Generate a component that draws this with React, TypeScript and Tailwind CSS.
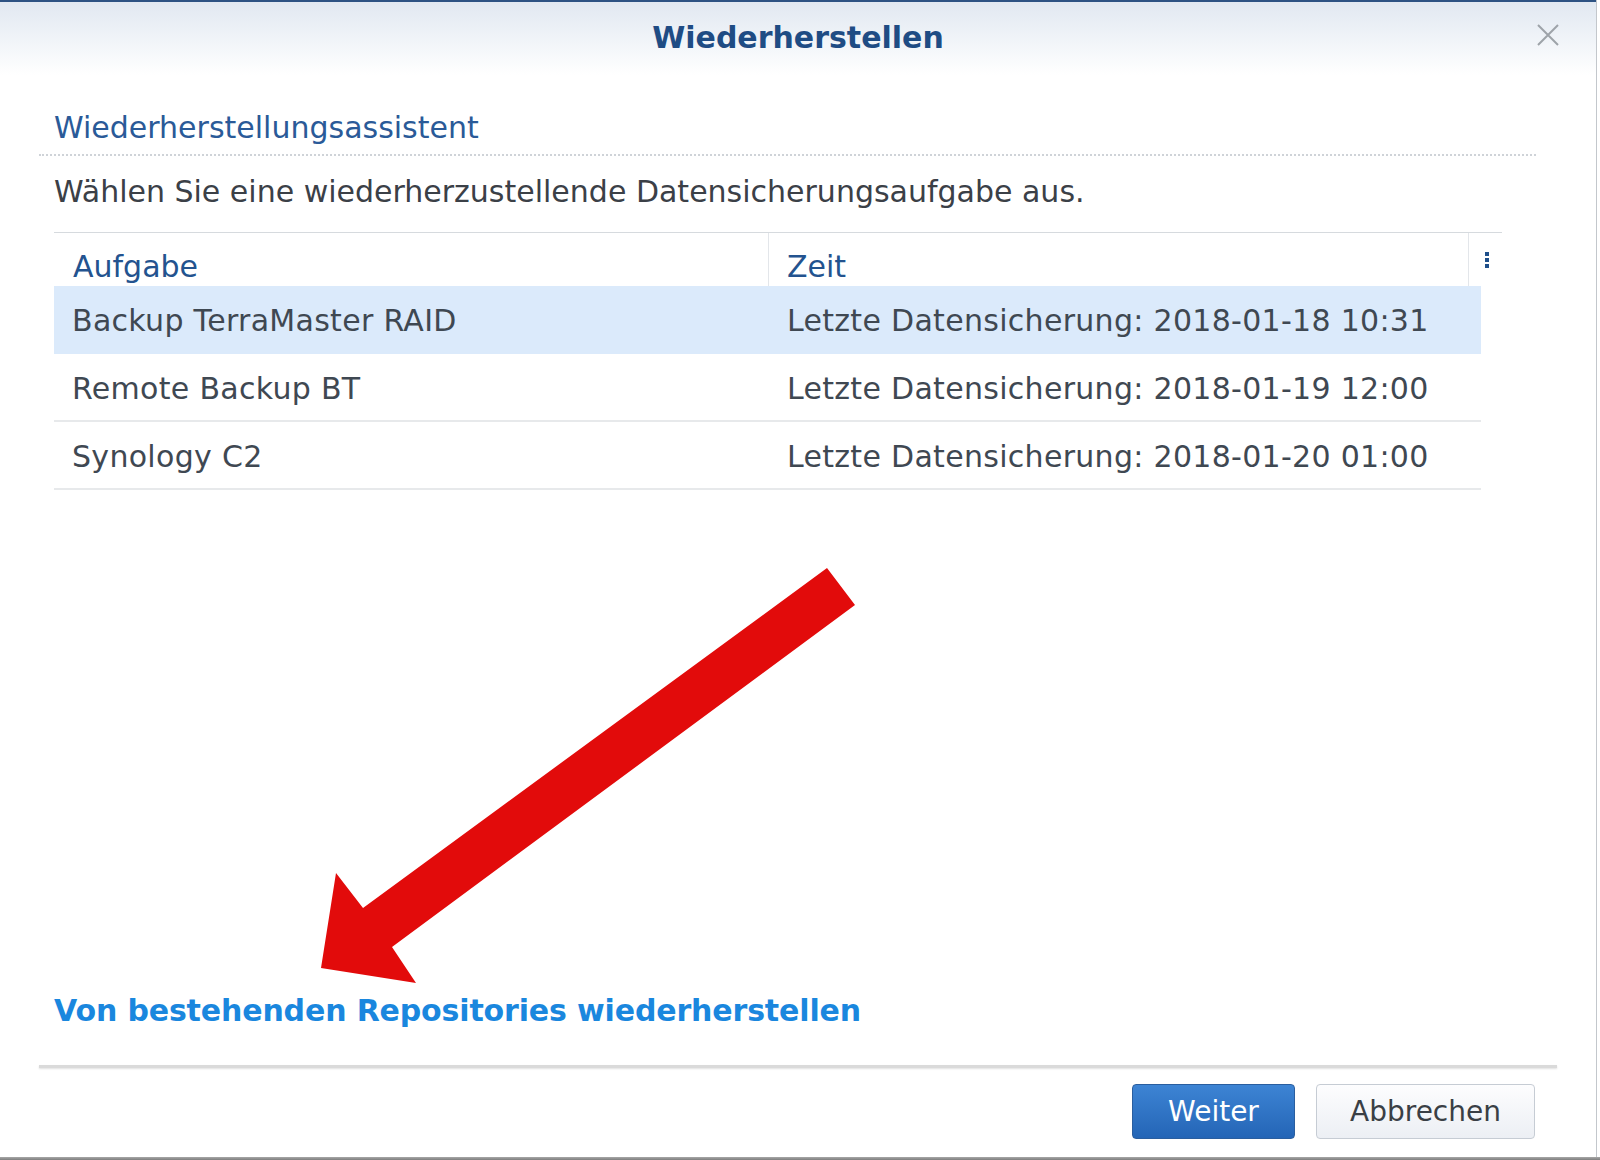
import React from 'react';

// one row of the backup task list
type Task = { name: string; time: string; selected?: boolean };

const tasks: Task[] = [
  { name: 'Backup TerraMaster RAID', time: 'Letzte Datensicherung: 2018-01-18 10:31', selected: true },
  { name: 'Remote Backup BT', time: 'Letzte Datensicherung: 2018-01-19 12:00' },
  { name: 'Synology C2', time: 'Letzte Datensicherung: 2018-01-20 01:00' },
];

const App: React.FC = () => {
  return (
    <div className="relative w-[1600px] h-[1160px] overflow-hidden bg-white font-['DejaVu_Sans',sans-serif]">
      <div className="flex flex-col w-[1597px] h-[1157px] border-r border-[#c3c7cc]">
        {/* Title bar */}
        <div className="relative h-[75px] shrink-0 border-t-2 border-[#2d5283] bg-gradient-to-b from-[#e1e8f1] to-white flex justify-center pt-[18px]">
          <span className="text-[30px] leading-[36px] font-bold text-[#1f4c84]">Wiederherstellen</span>
          <button className="absolute right-[37px] top-[22px]" title="Schließen">
            <svg width="22" height="22" viewBox="0 0 22 22">
              <path d="M1 1 L21 21 M21 1 L1 21" stroke="#9ea3a9" strokeWidth="2" fill="none" />
            </svg>
          </button>
        </div>

        {/* Content */}
        <div className="flex-1 flex flex-col pb-[36px]">
          <div className="ml-[39px] w-[1497px] mt-[35px] pl-[15px] pb-[8px] border-b-2 border-dotted border-[#cfd3d8]">
            <span className="text-[30px] leading-[36px] text-[#2a5a98]">Wiederherstellungsassistent</span>
          </div>
          <div className="px-[54px]">
            <p className="mt-[18px] mb-[1px] text-[30px] leading-[36px] text-[#3b4047]">
              Wählen Sie eine wiederherzustellende Datensicherungsaufgabe aus.
            </p>

            {/* Table */}
            <div className="mt-[22px] w-[1448px]">
              <div className="flex h-[54px] border-t border-[#d6dade]">
                <div className="w-[715px] pl-[19px] pt-[16px] border-r border-[#e3e6ea] text-[30px] leading-[36px] text-[#23538f]">
                  Aufgabe
                </div>
                <div className="w-[700px] pl-[18px] pt-[16px] border-r border-[#e3e6ea] text-[30px] leading-[36px] text-[#23538f]">
                  Zeit
                </div>
                <div className="flex-1 flex flex-col items-center gap-[2px] pt-[19px] pl-[2px]">
                  <span className="w-[4px] h-[4px] bg-[#1f4f8a]" />
                  <span className="w-[4px] h-[4px] bg-[#1f4f8a]" />
                  <span className="w-[4px] h-[4px] bg-[#1f4f8a]" />
                </div>
              </div>
              <div className="w-[1427px]">
                {tasks.map((t) => (
                  <div
                    key={t.name}
                    className={`flex items-center h-[68px] pt-[3px] border-b-2 text-[30px] leading-[36px] tracking-[0.3px] text-[#3f4852] ${
                      t.selected ? 'bg-[#dbeafb] border-[#dbeafb]' : 'border-[#e7e9eb]'
                    }`}
                  >
                    <div className="w-[714px] pl-[18px] whitespace-nowrap">{t.name}</div>
                    <div className="pl-[19px] whitespace-nowrap">{t.time}</div>
                  </div>
                ))}
              </div>
            </div>
          </div>

          <div className="mt-auto px-[54px]">
            <a className="text-[30px] leading-[36px] font-bold tracking-[-0.15px] text-[#1a87de] cursor-pointer">
              Von bestehenden Repositories wiederherstellen
            </a>
          </div>
        </div>

        {/* Footer */}
        <div className="h-[92px] shrink-0 flex flex-col">
          <div className="ml-[39px] w-[1518px] h-[3px] bg-[#dadada] shadow-[0_1px_2px_rgba(0,0,0,0.12)]" />
          <div className="flex justify-end gap-[21px] pt-[16px] pr-[61px]">
            <button className="w-[163px] h-[55px] rounded-[4px] border border-[#2a5e9f] bg-gradient-to-b from-[#3d84d4] to-[#2465b6] text-white text-[28px]">
              Weiter
            </button>
            <button className="w-[219px] h-[55px] rounded-[4px] border border-[#c6ccd4] bg-gradient-to-b from-[#fdfdfe] to-[#eceff4] text-[#3a3f45] text-[28px]">
              Abbrechen
            </button>
          </div>
        </div>
      </div>
      <div className="h-[3px] bg-gradient-to-b from-[#a8a8a8] to-[#7e7e7e]" />

      {/* Red annotation arrow */}
      <svg className="absolute left-0 top-0 pointer-events-none" width="1600" height="1160">
        <polygon
          points="827,568 855,605 392,947 416,983 321,968 336,873 363,908"
          fill="#e20b0b"
        />
      </svg>
    </div>
  );
};

export default App;
